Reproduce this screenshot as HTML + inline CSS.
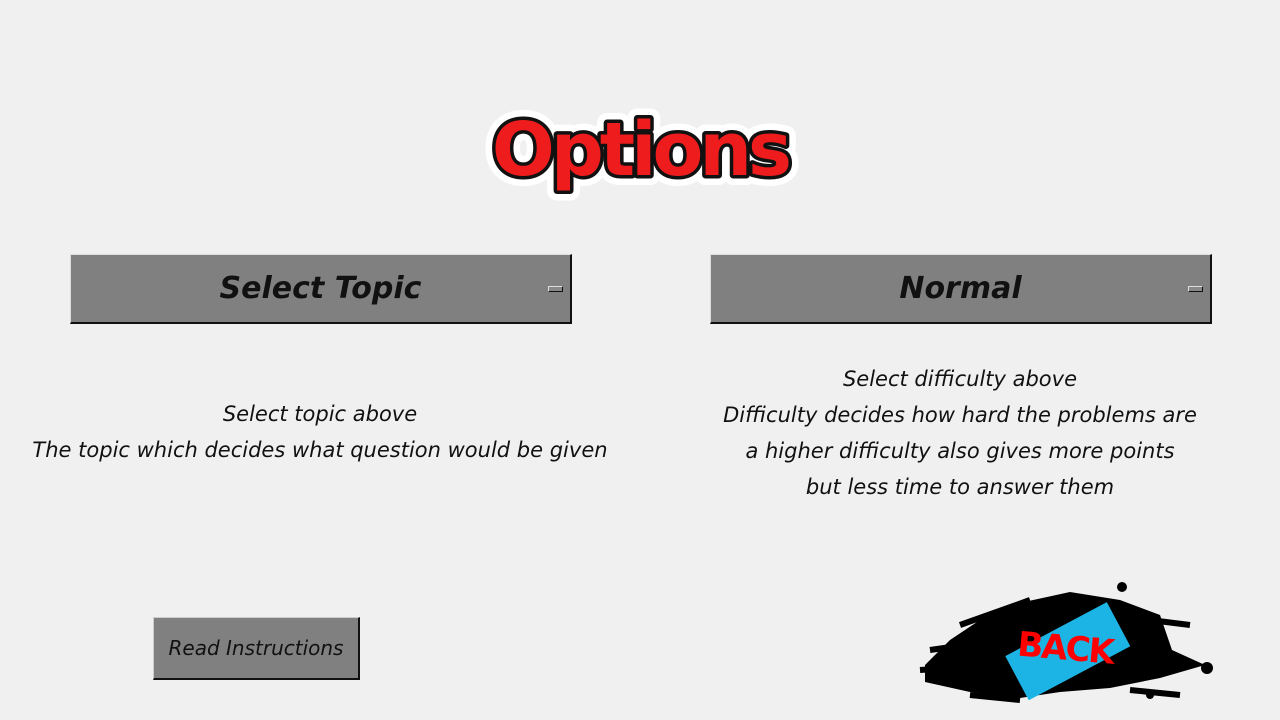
<!DOCTYPE html>
<html><head><style>
body{margin:0;width:1280px;height:720px;background:#f0f0f0;position:relative;overflow:hidden;font-family:"DejaVu Sans","Liberation Sans",sans-serif;}
.dd{position:absolute;top:254px;width:499px;height:67px;background:#808080;border-top:1px solid #ddd;border-left:1px solid #ddd;border-right:2px solid #111;border-bottom:2px solid #111;font-size:30px;font-weight:bold;font-style:italic;line-height:67px;text-align:center;color:#111;}
.dd i{position:absolute;right:7px;top:31px;width:13px;height:4px;background:#888;border-top:1px solid #ddd;border-left:1px solid #ddd;border-right:1px solid #111;border-bottom:1px solid #111;}
.t{position:absolute;text-align:center;font-size:21px;line-height:36px;color:#111;font-style:italic;}
</style></head><body>
<svg style="position:absolute;left:440px;top:80px" width="400" height="140">
<text x="200" y="95" text-anchor="middle" font-family="DejaVu Sans" font-weight="bold" font-size="74" fill="#fff" stroke="#fff" stroke-width="20" stroke-linejoin="round" letter-spacing="-4">Options</text>
<text x="200" y="95" text-anchor="middle" font-family="DejaVu Sans" font-weight="bold" font-size="74" fill="#ee1c1c" stroke="#111" stroke-width="7" stroke-linejoin="round" paint-order="stroke" letter-spacing="-4">Options</text>
</svg>
<div class="dd" style="left:70px">Select Topic<i></i></div>
<div class="dd" style="left:710px">Normal<i></i></div>
<div class="t" style="left:0;width:640px;top:396px">Select topic above<br>The topic which decides what question would be given</div>
<div class="t" style="left:640px;width:640px;top:361px">Select difficulty above<br>Difficulty decides how hard the problems are<br>a higher difficulty also gives more points<br>but less time to answer them</div>
<div style="position:absolute;left:153px;top:617px;width:204px;height:60px;background:#808080;border-top:1px solid #ccc;border-left:1px solid #ccc;border-right:2px solid #111;border-bottom:2px solid #111;font-size:20px;font-style:italic;line-height:60px;text-align:center;color:#111">Read Instructions</div>
<svg style="position:absolute;left:910px;top:570px" width="320" height="150">
<path d="M15 95 L40 70 L70 50 L100 35 L160 22 L210 30 L250 45 L262 80 L295 95 L250 108 L200 118 L150 122 L110 128 L60 122 L15 112Z" fill="#000"/>
<path d="M50 55 L120 30 M20 80 L90 70 M240 50 L280 55 M220 120 L270 125 M60 125 L110 130 M10 100 L40 98" stroke="#000" stroke-width="6"/>
<circle cx="212" cy="17" r="5" fill="#000"/><circle cx="297" cy="98" r="6" fill="#000"/><circle cx="240" cy="125" r="4" fill="#000"/>
<g transform="rotate(-28 160 80)"><rect x="100" y="55" width="115" height="50" fill="#1cb4e4"/></g>
<text x="155" y="90" text-anchor="middle" font-family="DejaVu Sans" font-weight="bold" font-size="34" fill="#f00" transform="rotate(5 160 80)" letter-spacing="-2">BACK</text>
</svg>
</body></html>
